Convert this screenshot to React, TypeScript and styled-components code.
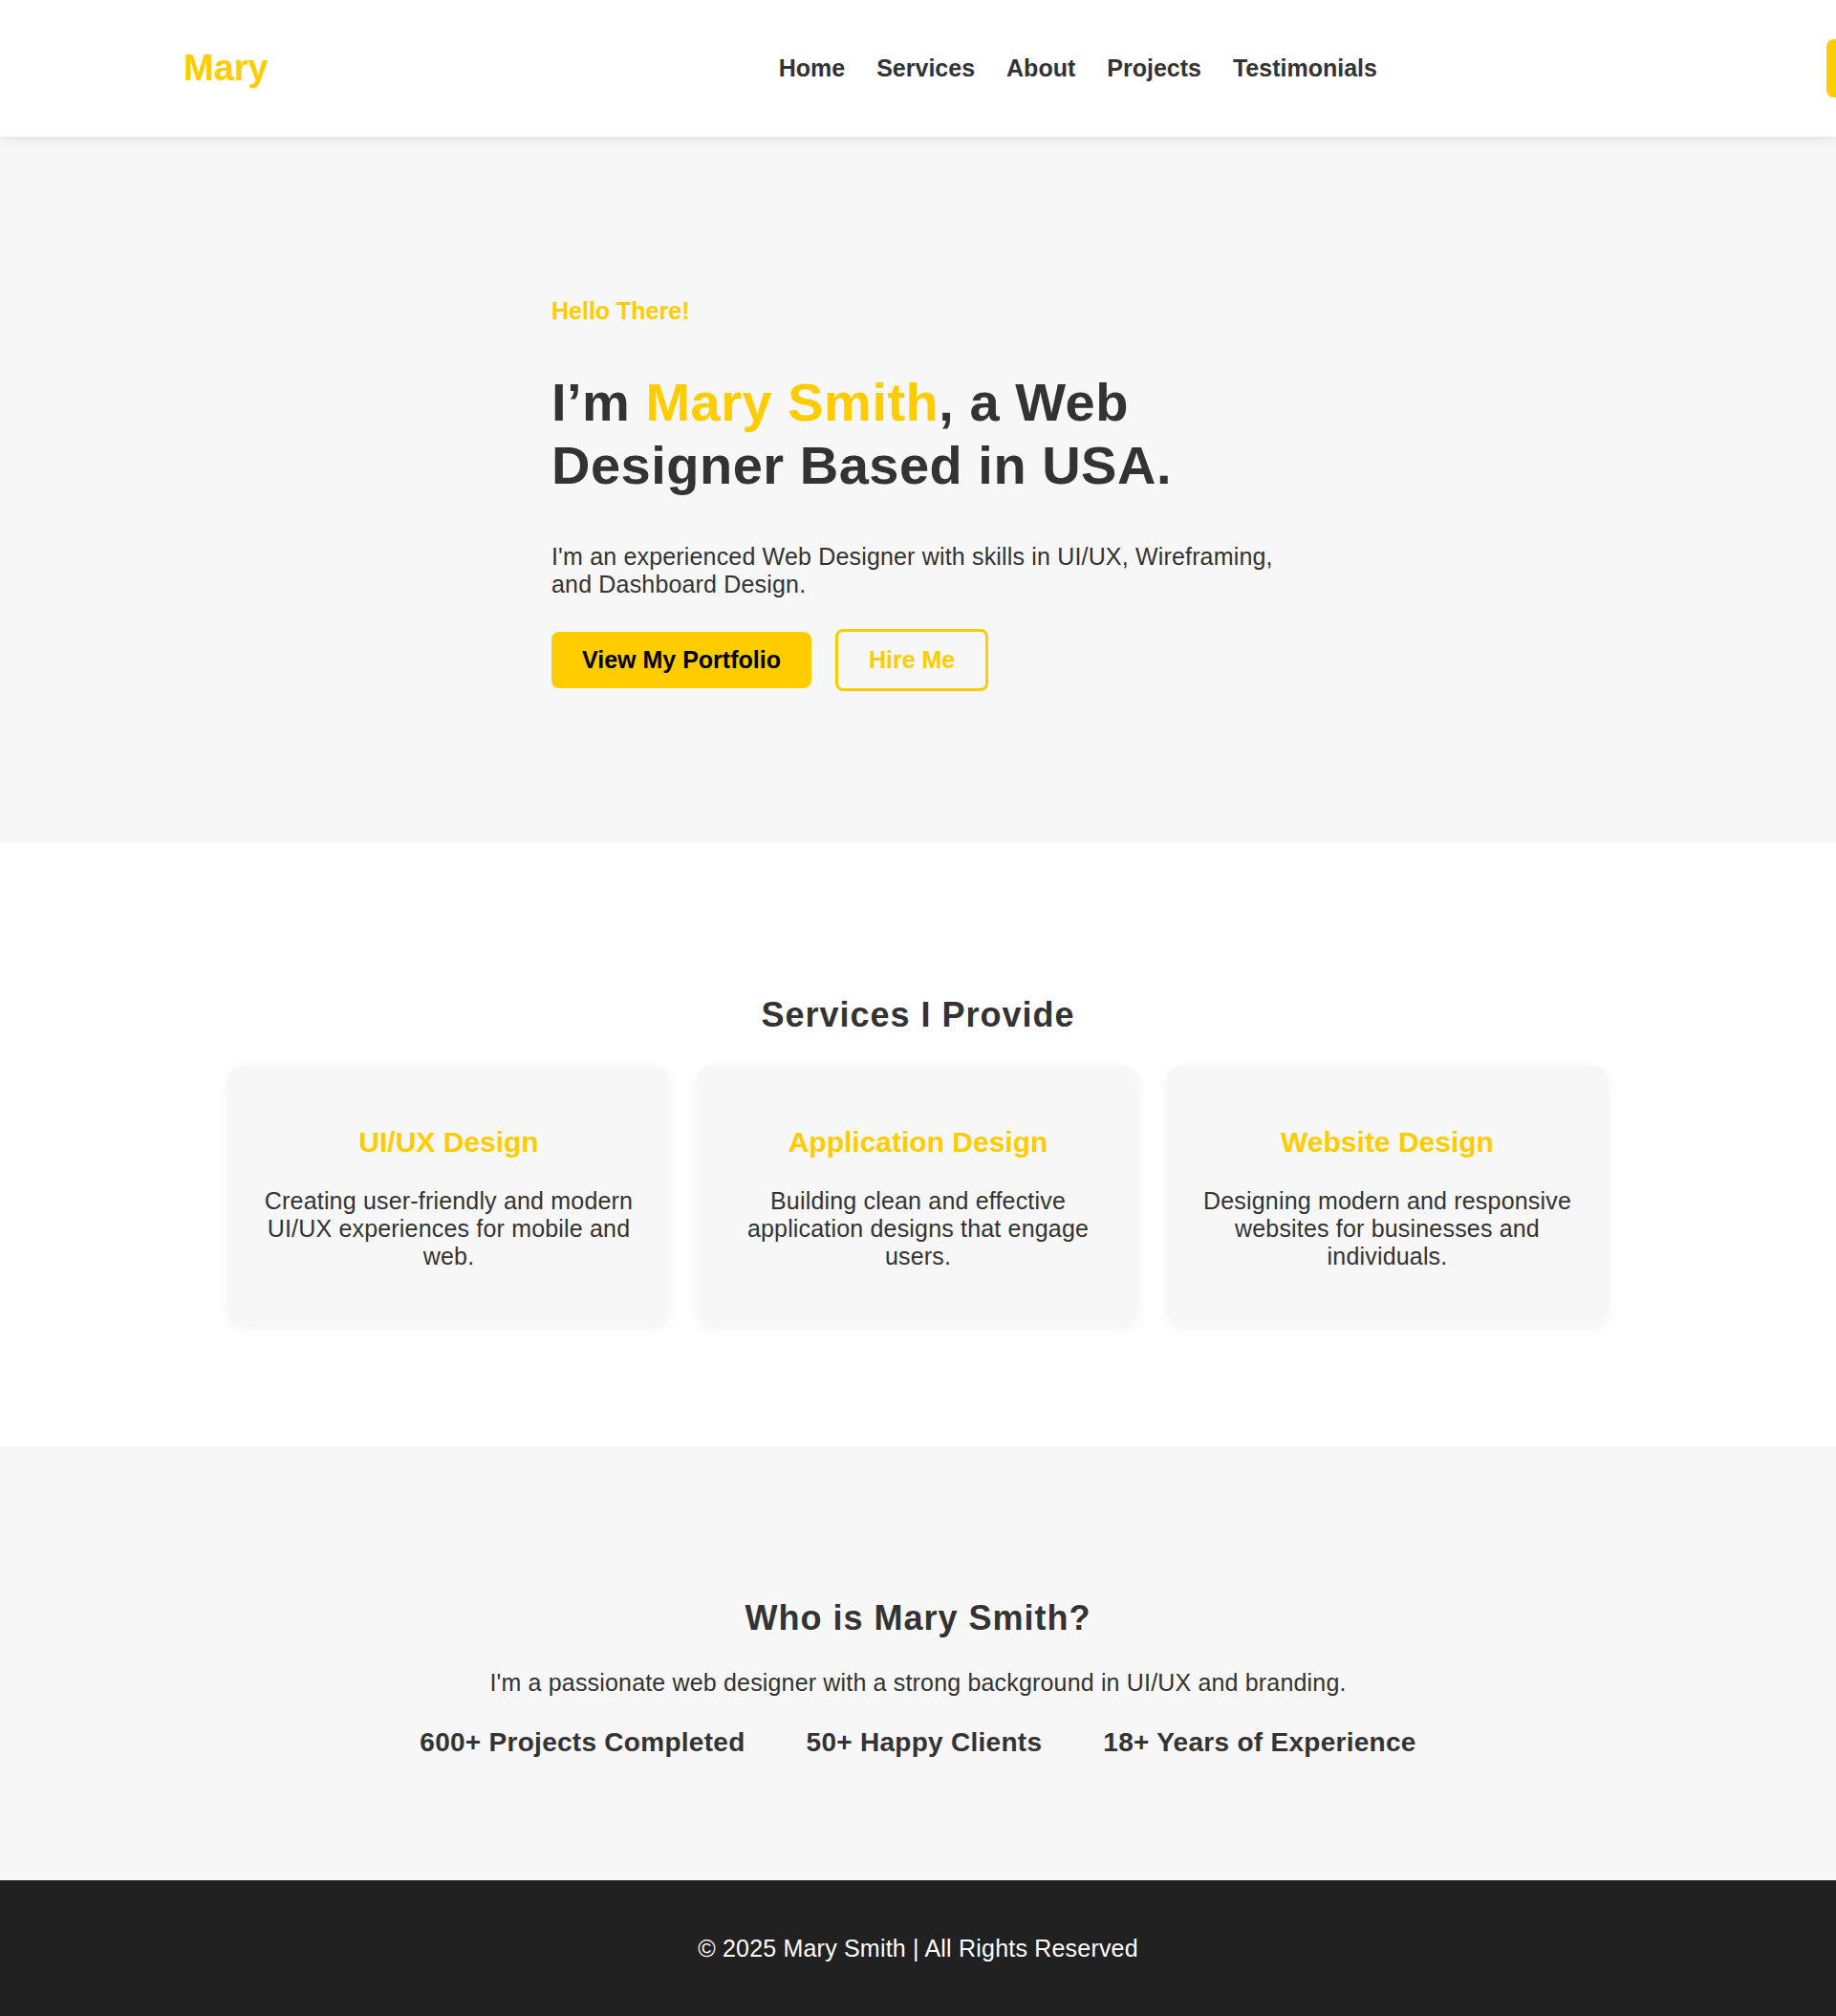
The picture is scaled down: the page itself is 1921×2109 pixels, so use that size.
import React from "react";
import styled, { createGlobalStyle } from "styled-components";

const YELLOW = "#ffcc00";
const DARK = "#333333";

const GlobalStyle = createGlobalStyle`
  html, body {
    margin: 0;
    padding: 0;
    background: #ffffff;
  }
  body {
    font-family: "Liberation Sans", Arial, Helvetica, sans-serif;
    color: ${DARK};
    overflow-x: hidden;
  }
  * { box-sizing: border-box; }
`;

const Header = styled.header`
  position: relative;
  z-index: 10;
  height: 143px;
  background: #ffffff;
  box-shadow: 0 2px 10px rgba(0, 0, 0, 0.1);
  display: flex;
  align-items: center;
  padding-left: 192px;
  overflow: hidden;
`;

const Logo = styled.div`
  flex-shrink: 0;
  font-size: 38px;
  font-weight: 700;
  color: ${YELLOW};
`;

const Nav = styled.nav`
  flex-shrink: 0;
  display: flex;
  gap: 33px;
  margin-left: 534px;
`;

const NavLink = styled.a`
  font-size: 25px;
  font-weight: 700;
  color: ${DARK};
  text-decoration: none;
`;

const HeaderButton = styled.a`
  flex-shrink: 0;
  margin-left: 470px;
  height: 61px;
  padding: 0 32px;
  display: flex;
  align-items: center;
  background: ${YELLOW};
  border-radius: 8px;
  font-size: 25px;
  font-weight: 700;
  color: #000;
  white-space: nowrap;
`;

const Hero = styled.section`
  background: #f7f7f7;
  padding: 168px 0 159px;
`;

const HeroInner = styled.div`
  width: 767px;
  margin: 0 auto;
`;

const Greeting = styled.p`
  margin: 0;
  font-size: 25px;
  font-weight: 700;
  color: ${YELLOW};
`;

const HeroTitle = styled.h1`
  margin: 48px 0 48px;
  font-size: 56px;
  line-height: 66px;
  letter-spacing: 0.5px;
  font-weight: 700;
  color: ${DARK};
`;

const Accent = styled.span`
  color: ${YELLOW};
`;

const HeroText = styled.p`
  margin: 0 0 32px;
  font-size: 25px;
  letter-spacing: 0.17px;
  color: ${DARK};
`;

const ButtonRow = styled.div`
  display: flex;
  align-items: center;
  gap: 25px;
`;

const Button = styled.a<{ $outline?: boolean }>`
  display: inline-block;
  padding: 15px 32px;
  border-radius: 8px;
  font-size: 25px;
  font-weight: 700;
  text-decoration: none;
  cursor: pointer;
  background: ${(p) => (p.$outline ? "transparent" : YELLOW)};
  color: ${(p) => (p.$outline ? YELLOW : "#000")};
  border: ${(p) => (p.$outline ? `3px solid ${YELLOW}` : "none")};
`;

const Section = styled.section<{ $tint?: boolean }>`
  background: ${(p) => (p.$tint ? "#f7f7f7" : "#ffffff")};
  padding: 125px 0 128px;
  text-align: center;
`;

const SectionTitle = styled.h2`
  margin: 34px 0 32px;
  font-size: 36px;
  letter-spacing: 1px;
  font-weight: 700;
  color: ${DARK};
`;

const CardGrid = styled.div`
  width: 1443px;
  margin: 0 auto;
  display: grid;
  grid-template-columns: repeat(3, 1fr);
  gap: 30px;
`;

const Card = styled.div`
  background: #f7f7f7;
  border-radius: 15px;
  box-shadow: 0 4px 14px rgba(0, 0, 0, 0.06);
  padding: 30px;
  height: 270px;
`;

const CardTitle = styled.h3`
  margin: 33px 0 30px;
  font-size: 30px;
  font-weight: 700;
  color: ${YELLOW};
`;

const CardText = styled.p`
  margin: 0;
  font-size: 25px;
  letter-spacing: 0.18px;
  color: ${DARK};
`;

const AboutText = styled.p`
  margin: 0;
  font-size: 25px;
  letter-spacing: 0.17px;
  color: ${DARK};
`;

const Stats = styled.div`
  margin-top: 32px;
  display: flex;
  justify-content: center;
  gap: 64px;
`;

const Stat = styled.div`
  font-size: 28px;
  font-weight: 700;
  letter-spacing: 0.28px;
  color: ${DARK};
`;

const Footer = styled.footer`
  background: #212121;
  color: #ffffff;
  text-align: center;
  padding: 57px 0;
  font-size: 25px;
  letter-spacing: 0.2px;
`;

const services = [
  {
    title: "UI/UX Design",
    text: "Creating user-friendly and modern UI/UX experiences for mobile and web.",
  },
  {
    title: "Application Design",
    text: "Building clean and effective application designs that engage users.",
  },
  {
    title: "Website Design",
    text: "Designing modern and responsive websites for businesses and individuals.",
  },
];

const stats = ["600+ Projects Completed", "50+ Happy Clients", "18+ Years of Experience"];

export default function App() {
  return (
    <>
      <GlobalStyle />
      <Header>
        <Logo>Mary</Logo>
        <Nav>
          <NavLink href="#home">Home</NavLink>
          <NavLink href="#services">Services</NavLink>
          <NavLink href="#about">About</NavLink>
          <NavLink href="#projects">Projects</NavLink>
          <NavLink href="#testimonials">Testimonials</NavLink>
        </Nav>
        <HeaderButton href="#contact">Contact Me</HeaderButton>
      </Header>

      <Hero id="home">
        <HeroInner>
          <Greeting>Hello There!</Greeting>
          <HeroTitle>
            I’m <Accent>Mary Smith</Accent>, a Web Designer Based in USA.
          </HeroTitle>
          <HeroText>
            I'm an experienced Web Designer with skills in UI/UX, Wireframing, and Dashboard Design.
          </HeroText>
          <ButtonRow>
            <Button>View My Portfolio</Button>
            <Button $outline>Hire Me</Button>
          </ButtonRow>
        </HeroInner>
      </Hero>

      <Section id="services">
        <SectionTitle>Services I Provide</SectionTitle>
        <CardGrid>
          {services.map((s) => (
            <Card key={s.title}>
              <CardTitle>{s.title}</CardTitle>
              <CardText>{s.text}</CardText>
            </Card>
          ))}
        </CardGrid>
      </Section>

      <Section $tint id="about">
        <SectionTitle>Who is Mary Smith?</SectionTitle>
        <AboutText>
          I'm a passionate web designer with a strong background in UI/UX and branding.
        </AboutText>
        <Stats>
          {stats.map((s) => (
            <Stat key={s}>{s}</Stat>
          ))}
        </Stats>
      </Section>

      <Footer>© 2025 Mary Smith | All Rights Reserved</Footer>
    </>
  );
}
